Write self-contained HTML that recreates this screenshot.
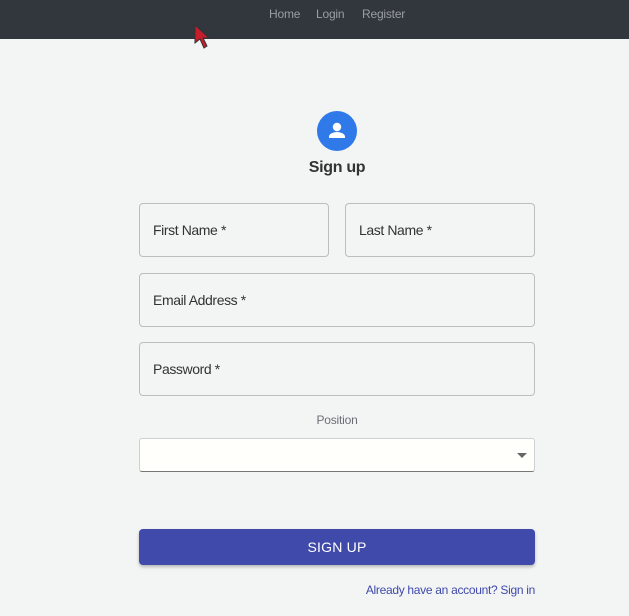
<!DOCTYPE html>
<html><head><meta charset="utf-8"><style>
*{box-sizing:border-box;margin:0;padding:0}
body{width:629px;height:616px;background:#f3f4f4;font-family:"Liberation Sans",Roboto,sans-serif;position:relative;overflow:hidden}
.nav{position:absolute;left:0;top:0;width:629px;height:39px;background:#32363d}
.nav span{position:absolute;top:7px;font-size:12px;color:#9a9ea3;letter-spacing:-.2px}
.field{position:absolute;border:1px solid #bdbdbd;border-radius:4px;height:54px}
.field span{position:absolute;left:13px;top:18px;font-size:14px;color:#333;letter-spacing:-.4px}
</style></head><body>
<div class="nav"><span style="left:269px">Home</span><span style="left:316px">Login</span><span style="left:362px">Register</span></div>
<svg style="position:absolute;left:192px;top:23px" width="24" height="30" viewBox="0 0 24 30"><path d="M3 2 L3 20 L8 16 L12 25 L15 23 L11 15 L17 15 Z" fill="#c81e2c" stroke="#333" stroke-width="1"/></svg>
<div style="position:absolute;left:317px;top:111px;width:40px;height:40px;border-radius:50%;background:#2f7ae8">
<svg width="40" height="40" viewBox="0 0 40 40"><circle cx="20" cy="16" r="4.2" fill="#fff"/><path d="M12 27 v-1.5 c0-3 5.5-4.5 8-4.5 s8 1.5 8 4.5 V27 Z" fill="#fff"/></svg></div>
<div style="position:absolute;left:139px;width:396px;top:159px;text-align:center;font-size:16px;font-weight:bold;color:#333;letter-spacing:-.3px">Sign up</div>
<div class="field" style="left:139px;top:203px;width:190px"><span>First Name *</span></div>
<div class="field" style="left:345px;top:203px;width:190px"><span>Last Name *</span></div>
<div class="field" style="left:139px;top:273px;width:396px"><span>Email Address *</span></div>
<div class="field" style="left:139px;top:342px;width:396px"><span>Password *</span></div>
<div style="position:absolute;left:139px;width:396px;top:413px;text-align:center;font-size:12px;color:#6b6f75;letter-spacing:-.2px">Position</div>
<div style="position:absolute;left:139px;top:438px;width:396px;height:34px;background:#fffffc;border:1px solid #cfd0d4;border-bottom:1px solid #777;border-radius:3px">
<div style="position:absolute;right:7px;top:14px;width:0;height:0;border-left:5px solid transparent;border-right:5px solid transparent;border-top:5px solid #666"></div></div>
<div style="position:absolute;left:139px;top:529px;width:396px;height:36px;background:#3f4aab;border-radius:4px;box-shadow:0 2px 3px rgba(0,0,0,.25);color:#fff;font-size:14px;font-weight:500;text-align:center;line-height:36px;letter-spacing:.2px">SIGN UP</div>
<div style="position:absolute;right:94px;top:583px;font-size:12px;color:#3f4aab;letter-spacing:-.3px">Already have an account? Sign in</div>
</body></html>
